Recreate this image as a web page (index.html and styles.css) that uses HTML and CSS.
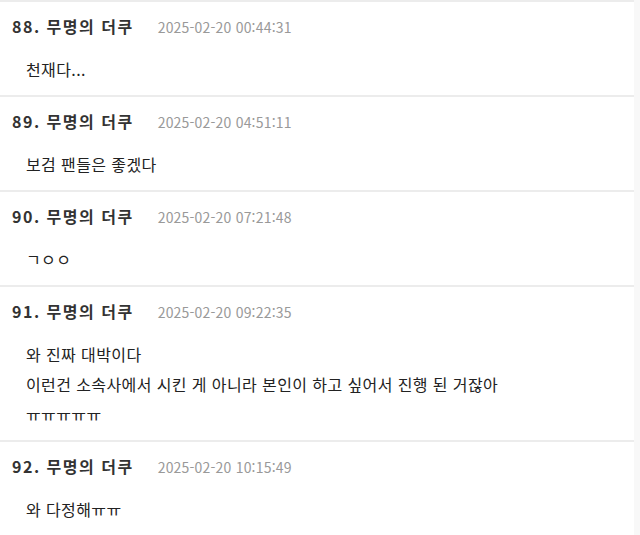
FILE: index.html
```html
<!DOCTYPE html>
<html lang="ko">
<head>
<meta charset="utf-8">
<link rel="stylesheet" href="styles.css">
</head>
<body>
<div class="list">
  <div class="item">
    <div class="head"><span class="name">88. 무명의 더쿠</span><span class="date">2025-02-20 00:44:31</span></div>
    <div class="text">천재다...</div>
  </div>
  <div class="item">
    <div class="head"><span class="name">89. 무명의 더쿠</span><span class="date">2025-02-20 04:51:11</span></div>
    <div class="text">보검 팬들은 좋겠다</div>
  </div>
  <div class="item">
    <div class="head"><span class="name">90. 무명의 더쿠</span><span class="date">2025-02-20 07:21:48</span></div>
    <div class="text">ㄱㅇㅇ</div>
  </div>
  <div class="item">
    <div class="head"><span class="name">91. 무명의 더쿠</span><span class="date">2025-02-20 09:22:35</span></div>
    <div class="text">와 진짜 대박이다<br>이런건 소속사에서 시킨 게 아니라 본인이 하고 싶어서 진행 된 거잖아<br>ㅠㅠㅠㅠㅠ</div>
  </div>
  <div class="item">
    <div class="head"><span class="name">92. 무명의 더쿠</span><span class="date">2025-02-20 10:15:49</span></div>
    <div class="text">와 다정해ㅠㅠ</div>
  </div>
</div>
</body>
</html>
```
FILE: styles.css
```css
html, body {
  margin: 0;
  padding: 0;
  background: #f8f8f8;
}
body {
  font-family: "Noto Sans CJK KR", "Noto Sans", sans-serif;
  color: #333;
}
.list {
  width: 634px;
  background: #fff;
  border-top: 2px solid #ececec;
}
.item {
  padding: 14px 12px 11px 12px;
  border-bottom: 2px solid #ececec;
}
.head {
  display: flex;
  align-items: baseline;
  gap: 24px;
  line-height: 20px;
}
.name {
  font-size: 16px;
  font-weight: bold;
  letter-spacing: 1.5px;
  color: #333;
}
.date {
  font-size: 14px;
  letter-spacing: 0.2px;
  color: #999;
}
.text {
  margin-top: 17px;
  padding-left: 14px;
  font-size: 16px;
  letter-spacing: 0.4px;
  line-height: 30px;
  color: #222;
}
```
